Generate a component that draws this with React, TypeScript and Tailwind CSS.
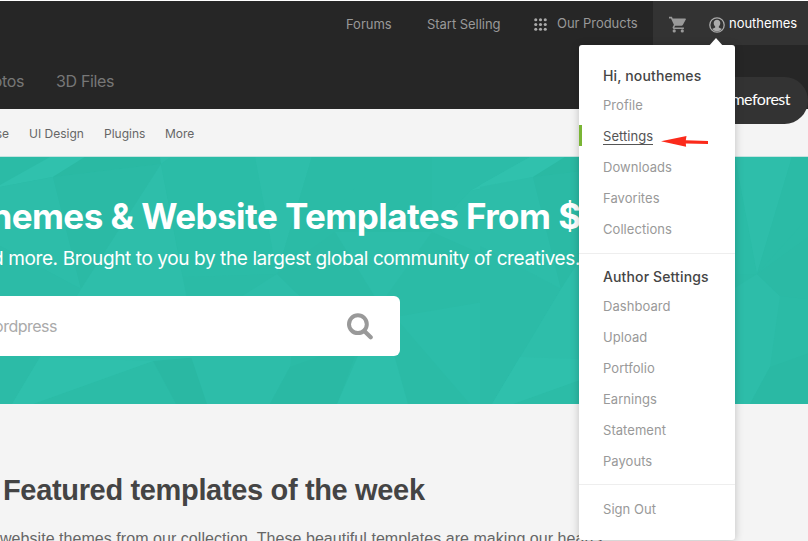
import React from "react";

const accountLinks = ["Profile", "Settings", "Downloads", "Favorites", "Collections"];
const authorLinks = ["Dashboard", "Upload", "Portfolio", "Earnings", "Statement", "Payouts"];

// One facet tile is 480px wide, repeated across the hero
const facets = [
  { points: "0,28 50,0 85,0 53,20 0,30", fill: "#30c1ad" },
  { points: "53,20 85,0 160,0 161,7", fill: "#2ab9a3" },
  { points: "161,7 160,0 171,0", fill: "#2ebeaa" },
  { points: "0,30 53,20 81,132 0,89", fill: "#2dbda9" },
  { points: "53,20 161,7 81,132", fill: "#2bbaa5" },
  { points: "0,89 81,132 12,247 0,247", fill: "#2cbba7" },
  { points: "161,7 207,247 12,247 81,132", fill: "#2ebeaa" },
  { points: "33,247 153,204 176,247", fill: "#2cbca7" },
  { points: "153,204 200,200 207,247 176,247", fill: "#2ab8a3" },
  { points: "12,247 40,200 153,204 33,247", fill: "#2fc0ac" },
  { points: "171,0 255,0 277,117 183,120 161,7", fill: "#2bbca7" },
  { points: "255,0 312,0 277,117", fill: "#2ebeaa" },
  { points: "312,0 383,0 277,117", fill: "#2bbba6" },
  { points: "277,117 183,176 207,247 270,247 290,210 300,139", fill: "#2dbda9" },
  { points: "277,117 300,139 380,148 335,75", fill: "#2bbaa5" },
  { points: "270,247 290,210 360,185 337,247", fill: "#2ab9a4" },
  { points: "335,75 432,75 380,148", fill: "#2dbda9" },
  { points: "380,148 337,247 408,247", fill: "#2ebfab" },
  { points: "432,0 530,0 470,34 432,75", fill: "#2cbca8" },
  { points: "470,34 530,0 565,0 533,20", fill: "#30c1ad" },
  { points: "432,75 470,34 533,20 561,132", fill: "#2dbda9" },
  { points: "395,160 561,132 492,247 470,247", fill: "#2cbda9" },
];

const HeroPattern = () => (
  <svg className="absolute inset-0" width="808" height="247" aria-hidden="true">
    <rect width="808" height="247" fill="#2bbba6" />
    <defs>
      <g id="facets">
        {facets.map((f) => (
          <polygon key={f.points} points={f.points} fill={f.fill} />
        ))}
      </g>
    </defs>
    <use href="#facets" />
    <use href="#facets" x="480" />
  </svg>
);

const CartIcon = () => (
  <svg width="17" height="17" viewBox="0 0 17 17" fill="#999">
    <path d="M0 .8h2.9l.8 1.7h12.5c.6 0 .9.6.6 1.1l-3 5.3c-.3.5-.8.8-1.4.8H6.200l-.8 1.400c-.1.2 0 .4.2.4h9.300v1.600H5.200c-1.300 0-2-1.300-1.400-2.400l1.100-2L2 2.400H0z" />
    <circle cx="5.200" cy="14.900" r="1.600" />
    <circle cx="13.300" cy="14.900" r="1.600" />
  </svg>
);

const UserIcon = () => (
  <svg width="16" height="16" viewBox="0 0 16 16">
    <circle cx="8" cy="8" r="7.200" fill="none" stroke="#aaa" strokeWidth="1.300" />
    <path d="M8 2.700c2 0 3.300 1.400 3.300 3.400 0 1.500-.6 2.700-1.500 3.400v1l3.100 1.600A6.200 6.200 0 0 1 8 14.300a6.200 6.200 0 0 1-4.900-2.200l3.100-1.600v-1C5.300 8.800 4.700 7.600 4.700 6.100c0-2 1.300-3.400 3.300-3.400z" fill="#aaa" />
  </svg>
);

const GridIcon = () => (
  <svg className="mt-[3px]" width="13" height="13" viewBox="0 0 13 13" fill="#aaa">
    {[1.75, 6.5, 11.25].map((y) =>
      [1.75, 6.5, 11.25].map((x) => <circle key={`${x}-${y}`} cx={x} cy={y} r="1.550" />)
    )}
  </svg>
);

const SearchIcon = () => (
  <svg width="26" height="27" viewBox="0 0 26 27" fill="none" stroke="#999">
    <circle cx="10.900" cy="11.200" r="8.900" strokeWidth="4" />
    <path d="M17.800 18.400l5.900 5.900" strokeWidth="4.200" strokeLinecap="round" />
  </svg>
);

const MenuLink = ({ label }: { label: string }) => {
  const active = label === "Settings";
  return (
    <li className="relative flex h-[31px] items-center pl-6">
      {active && <span className="absolute left-0 top-[5px] h-[21px] w-[3px] bg-[#7ab535]" />}
      <a className={active ? "mt-px border-b border-[#555] leading-4 text-[#545454]" : "leading-4 text-[#999]"}>
        {label}
      </a>
      {active && (
        <svg className="absolute left-[82px] top-[16px]" width="48" height="11" viewBox="0 0 48 11">
          <path d="M0 5.200L25.500 0l-.7 4.200L47 5v2.900l-22.200-.5.300 3.400z" fill="#fb2a1b" />
        </svg>
      )}
    </li>
  );
};

const AccountMenu = () => (
  <div className="absolute left-[579px] top-[44px] z-20 h-[495px] w-[156px] rounded-[3px] bg-white text-[13px] tracking-[0.05px] shadow-[0_1px_8px_rgba(0,0,0,0.22)]">
    <svg className="absolute -top-[7px] left-[129px]" width="16" height="9" viewBox="0 0 16 9">
      <path d="M0 9L8 0l8 9z" fill="#fff" />
    </svg>
    <div className="h-[209px] border-b border-[#eee] pt-[21px]">
      <h3 className="h-[23px] pl-6 text-[14px] font-medium leading-5 tracking-[0.13px] text-[#454545]">Hi, nouthemes</h3>
      <ul>
        {accountLinks.map((label) => (
          <MenuLink key={label} label={label} />
        ))}
      </ul>
    </div>
    <div className="h-[231px] border-b border-[#eee] pt-[13px]">
      <h3 className="h-[23px] pl-6 text-[14px] font-medium leading-5 tracking-[0.13px] text-[#454545]">Author Settings</h3>
      <ul>
        {authorLinks.map((label) => (
          <MenuLink key={label} label={label} />
        ))}
      </ul>
    </div>
    <ul className="pt-2">
      <MenuLink label="Sign Out" />
    </ul>
  </div>
);

const App = () => {
  return (
    <div className="relative h-[541px] w-[808px] overflow-hidden whitespace-nowrap border-t border-white bg-[#f4f4f4] font-['Inter',sans-serif]">
      {/* Header */}
      <header className="h-[108px] bg-[#262626]">
        <div className="flex h-11 text-[13px] leading-[46px] tracking-[-0.04px] text-[#999]">
          <a className="ml-[346px] w-[81px]">Forums</a>
          <a className="w-[107px]">Start Selling</a>
          <a className="flex w-[119px] items-center gap-[10px]">
            <GridIcon />
            Our Products
          </a>
          <div className="flex w-[155px] items-center bg-[#333] pl-4">
            <span className="mt-[3px]">
              <CartIcon />
            </span>
            <span className="ml-[23px] mt-1">
              <UserIcon />
            </span>
            <a className="ml-1 text-white">nouthemes</a>
          </div>
        </div>
        <div className="flex h-16 text-base leading-[72px] tracking-[-0.35px] text-[#777]">
          <a className="flex w-6 justify-end">Photos</a>
          <a className="ml-8">3D Files</a>
          <div className="relative z-10 ml-auto mt-8 flex h-[47px] w-24 items-center justify-end rounded-r-[24px] bg-[#333] pb-[3px] pr-[18px] font-['Lato',sans-serif] text-[16px] leading-[44px] tracking-[-0.5px] text-white">
            themeforest
          </div>
        </div>
      </header>

      {/* Categories */}
      <nav className="flex h-12 border-b border-[#c5e3df] text-[12px] leading-[49px] text-[#666]">
        <a className="flex w-[9px] justify-end">eCommerse</a>
        <a className="ml-5 w-[75px]">UI Design</a>
        <a className="w-[61px]">Plugins</a>
        <a>More</a>
      </nav>

      {/* Hero */}
      <section className="relative h-[247px] overflow-hidden">
        <HeroPattern />
        <div className="relative flex flex-col text-white">
          <h1 className="flex h-[86px] w-[602px] items-end justify-end text-[35px] font-bold leading-[54px] tracking-[-0.55px]">
            Themes &amp; Website Templates From $2
          </h1>
          <p className="flex h-[53px] w-[580px] justify-end text-[19px] leading-[32px] tracking-[-0.4px]">
            and more. Brought to you by the largest global community of creatives.
          </p>
          <div className="flex h-[60px] w-[400px] items-center justify-between rounded-r-[6px] bg-white pr-[27px]">
            <span className="flex w-[57px] justify-end text-[16px] tracking-[-0.5px] text-[#aaa]">wordpress</span>
            <SearchIcon />
          </div>
        </div>
      </section>

      {/* Featured */}
      <section className="font-['Liberation_Sans',sans-serif] text-[#444]">
        <h2 className="ml-[3px] mt-[66px] text-[29px] font-bold leading-10 tracking-[-0.34px]">Featured templates of the week</h2>
        <p className="mt-[17px] text-[16px] leading-6 tracking-[0.05px] text-[#666]">
          website themes from our collection. These beautiful templates are making our hearts
        </p>
      </section>

      <AccountMenu />
    </div>
  );
};

export default App;
